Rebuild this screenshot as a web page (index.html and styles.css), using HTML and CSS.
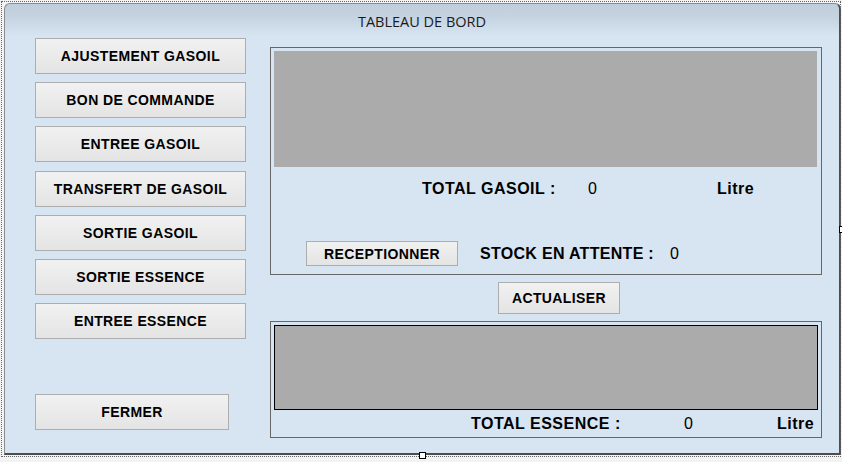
FILE: index.html
```html
<!DOCTYPE html>
<html lang="fr">
<head>
<meta charset="utf-8">
<title>TABLEAU DE BORD</title>
<link rel="stylesheet" href="styles.css">
</head>
<body>
<div class="designer">
  <div class="form">
    <div class="title">TABLEAU DE BORD</div>
    <div class="main">
      <div class="left">
        <button class="btn menu">AJUSTEMENT GASOIL</button>
        <button class="btn menu">BON DE COMMANDE</button>
        <button class="btn menu">ENTREE GASOIL</button>
        <button class="btn menu">TRANSFERT DE GASOIL</button>
        <button class="btn menu">SORTIE GASOIL</button>
        <button class="btn menu">SORTIE ESSENCE</button>
        <button class="btn menu">ENTREE ESSENCE</button>
        <button class="btn close">FERMER</button>
      </div>
      <div class="right">
        <div class="group g1">
          <div class="chart c1"></div>
          <div class="row r1">
            <span class="lbl l1">TOTAL GASOIL :</span>
            <span class="val v1">0</span>
            <span class="lbl">Litre</span>
          </div>
          <div class="row r2">
            <button class="btn recv">RECEPTIONNER</button>
            <span class="lbl l2">STOCK EN ATTENTE :</span>
            <span class="val">0</span>
          </div>
        </div>
        <button class="btn refresh">ACTUALISER</button>
        <div class="group g2">
          <div class="chart c2"></div>
          <div class="row r3">
            <span class="lbl l3">TOTAL ESSENCE :</span>
            <span class="val v3">0</span>
            <span class="lbl">Litre</span>
          </div>
        </div>
      </div>
    </div>
  </div>
  <div class="selection"></div>
  <div class="handle h-right"></div>
  <div class="handle h-bottom"></div>
</div>
</body>
</html>
```
FILE: styles.css
```css
html, body {
  margin: 0;
  padding: 0;
  background: #f3f3f3;
}
body {
  font-family: "Liberation Sans", Arial, sans-serif;
  color: #000;
}
.designer {
  position: relative;
  width: 842px;
  height: 462px;
  overflow: hidden;
}
.form {
  box-sizing: border-box;
  margin: 3px 0 0 4px;
  width: 837px;
  height: 452px;
  border: 1px solid #8c8c8c;
  border-right: 2px solid #4d4d4d;
  border-bottom: 2px solid #4d4d4d;
  border-radius: 6px 6px 0 0;
  background: linear-gradient(#bfcedc 0px, #c6d4e2 14px, #d7e4f2 32px, #d7e4f2 100%);
}
.title {
  margin-top: 10px;
  height: 16px;
  line-height: 16px;
  text-align: center;
  font-family: "Open Sans", "Noto Sans", sans-serif;
  font-size: 14.5px;
  color: #1a1a1a;
}
.main {
  display: flex;
  gap: 24px;
  margin-top: 8px;
  padding-left: 30px;
}
.left {
  display: flex;
  flex-direction: column;
  gap: 8.2px;
  width: 211px;
}
.btn {
  box-sizing: border-box;
  margin: 0;
  padding: 0;
  border: 1px solid #adadad;
  border-radius: 0;
  background: linear-gradient(#f1f1f1, #e4e4e4);
  font-family: "Liberation Sans", Arial, sans-serif;
  font-weight: bold;
  font-size: 14px;
  letter-spacing: 0.4px;
  color: #000;
  text-align: center;
}
.menu {
  width: 211px;
  height: 36px;
}
.close {
  width: 194px;
  height: 36px;
  margin-top: 47px;
}
.right {
  display: flex;
  flex-direction: column;
  align-items: flex-start;
  width: 552px;
  padding-top: 9px;
}
.group {
  box-sizing: border-box;
  width: 552px;
  border: 1px solid #666;
  padding: 3px 4px 0 3px;
}
.g1 { height: 228px; }
.g2 { height: 117px; margin-top: 7px; padding-right: 3px; }
.chart { background: #ababab; }
.c1 { height: 116px; }
.c2 { box-sizing: border-box; height: 85px; border: 1px solid #000; }
.row {
  display: flex;
  align-items: center;
  line-height: 18px;
  font-size: 16px;
}
.lbl {
  font-weight: bold;
  letter-spacing: 0.5px;
  white-space: nowrap;
}
.val { font-weight: normal; }
.r1 { margin-top: 13px; padding-left: 148px; }
.l1 { width: 166px; }
.v1 { width: 129px; }
.r2 { margin-top: 43px; padding-left: 32px; }
.recv { width: 152px; height: 25px; margin-right: 22px; }
.l2 { width: 190px; letter-spacing: 0.3px; }
.refresh {
  width: 122px;
  height: 32px;
  margin: 7px 0 0 228px;
}
.r3 { margin-top: 5px; padding-left: 197px; }
.l3 { width: 213px; }
.v3 { width: 93px; }
.selection {
  position: absolute;
  left: 1px;
  top: 1px;
  width: 838px;
  height: 454px;
  border: 1px dotted #666;
  pointer-events: none;
}
.handle {
  position: absolute;
  box-sizing: border-box;
  width: 7px;
  height: 7px;
  background: #fff;
  border: 1px solid #000;
}
.h-right { left: 839px; top: 226px; }
.h-bottom { left: 419px; top: 452px; }
```
